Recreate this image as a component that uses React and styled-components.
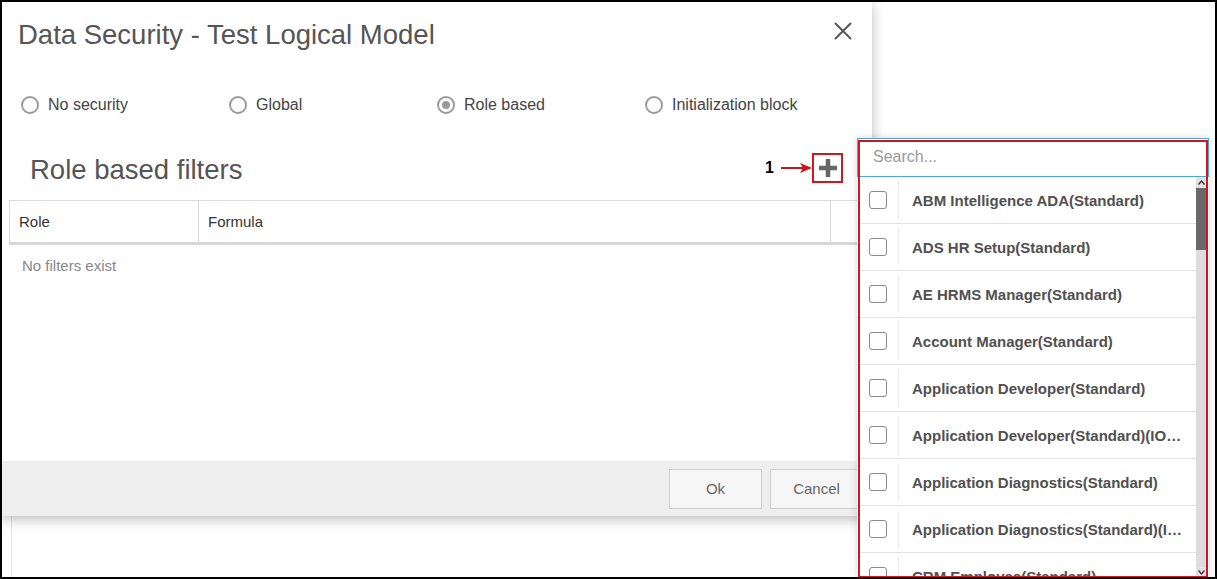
import React from "react";
import styled, { createGlobalStyle } from "styled-components";

const GlobalStyle = createGlobalStyle`
  html, body {
    margin: 0;
    padding: 0;
    background: #fff;
  }
  * {
    box-sizing: border-box;
  }
`;

const Frame = styled.div`
  position: relative;
  width: 1217px;
  height: 579px;
  border: 2px solid #000;
  background: #fff;
  overflow: hidden;
  font-family: "Liberation Sans", Arial, sans-serif;
`;

const BackPage = styled.div`
  height: 100%;
  padding-left: 9px;
`;

const BackPanel = styled.div`
  height: 100%;
  border-left: 1px solid #e4e4e4;
`;

const Dialog = styled.div`
  position: absolute;
  top: 0;
  left: 0;
  width: 870px;
  height: 514px;
  background: #fff;
  display: flex;
  flex-direction: column;
  box-shadow: 0 3px 12px rgba(0, 0, 0, 0.28);
`;

const Header = styled.div`
  display: flex;
  justify-content: space-between;
  align-items: flex-start;
  padding: 16px 20px 0 16px;
`;

const Title = styled.h1`
  margin: 0;
  font-size: 27.5px;
  line-height: 33px;
  font-weight: 400;
  color: #555;
`;

const CloseButton = styled.button`
  margin-top: 4px;
  width: 18px;
  height: 18px;
  padding: 0;
  border: none;
  background: none;
  display: flex;
  cursor: pointer;
`;

const RadioRow = styled.div`
  display: grid;
  grid-template-columns: repeat(4, 208px);
  margin-top: 44px;
  padding-left: 19px;
  height: 20px;
`;

const RadioItem = styled.label`
  display: flex;
  align-items: center;
  gap: 9px;
  font-size: 16px;
  color: #444;
`;

const RadioCircle = styled.span`
  width: 18px;
  height: 18px;
  border-radius: 50%;
  border: 2px solid #9b9b9b;
  display: flex;
  align-items: center;
  justify-content: center;
  &::after {
    content: "";
    width: 8px;
    height: 8px;
    border-radius: 50%;
    background: ${(props) => (props.checked ? "#9b9b9b" : "transparent")};
  }
`;

const SectionHeader = styled.div`
  display: flex;
  justify-content: space-between;
  align-items: center;
  margin-top: 38px;
  height: 33px;
  padding: 0 29px 0 28px;
`;

const SectionTitle = styled.h2`
  margin: 0;
  font-size: 27.5px;
  line-height: 33px;
  font-weight: 400;
  color: #555;
`;

const AddGroup = styled.div`
  display: flex;
  align-items: center;
  margin-top: -4px;
`;

const StepNumber = styled.span`
  font-size: 16px;
  font-weight: 700;
  color: #000;
  margin-right: 7px;
`;

const PlusBox = styled.button`
  width: 31px;
  height: 30px;
  border: 2px solid #d0161e;
  background: #fff;
  padding: 0;
  display: flex;
  align-items: center;
  justify-content: center;
  cursor: pointer;
`;

const Table = styled.div`
  margin: 14px 13px 0 7px;
`;

const HeadRow = styled.div`
  display: grid;
  grid-template-columns: 188px 632px 1fr;
  height: 45px;
  border: 1px solid #dcdcdc;
  border-bottom: 3px solid #d6d6d6;
`;

const HeadCell = styled.div`
  display: flex;
  align-items: center;
  padding-left: 9px;
  font-size: 15px;
  color: #333;
  border-left: ${(props) => (props.first ? "none" : "1px solid #dcdcdc")};
`;

const EmptyText = styled.div`
  padding: 12px 13px;
  font-size: 15px;
  line-height: 18px;
  color: #888;
`;

const Spacer = styled.div`
  flex: 1;
`;

const Footer = styled.div`
  height: 55px;
  background: #eeeeee;
  display: flex;
  justify-content: flex-end;
  align-items: center;
  gap: 8px;
  padding: 0 9px;
`;

const FooterButton = styled.button`
  width: 93px;
  height: 40px;
  border: 1px solid #cfcfcf;
  background: #f6f6f6;
  font-family: "Liberation Sans", Arial, sans-serif;
  font-size: 15px;
  color: #666;
  cursor: pointer;
`;

const Dropdown = styled.div`
  position: absolute;
  left: 855px;
  top: 136px;
  width: 352px;
  height: 440px;
  background: #fff;
  display: flex;
  flex-direction: column;
  box-shadow: 0 0 8px rgba(0, 0, 0, 0.14);
`;

const SearchInput = styled.input`
  height: 39px;
  flex-shrink: 0;
  border: 1px solid #4aa8dc;
  padding: 0 15px 2px;
  font-family: "Liberation Sans", Arial, sans-serif;
  font-size: 16px;
  color: #333;
  outline: none;
  &::placeholder {
    color: #9a9a9a;
  }
`;

const ListArea = styled.div`
  flex: 1;
  display: flex;
  min-height: 0;
  padding-right: 2px;
`;

const Rows = styled.div`
  flex: 1;
  min-width: 0;
  overflow: hidden;
`;

const Row = styled.div`
  display: flex;
  align-items: stretch;
  height: 47px;
  border-bottom: 1px solid #e3e3e3;
`;

const CheckCell = styled.div`
  width: 42px;
  flex-shrink: 0;
  display: flex;
  align-items: center;
  justify-content: center;
  margin: 4px 0;
  border-right: 1px solid #ebebeb;
`;

const Checkbox = styled.span`
  width: 18px;
  height: 18px;
  border: 1.5px solid #8a8a8a;
  border-radius: 3px;
  background: #fff;
`;

const RowLabel = styled.div`
  flex: 1;
  min-width: 0;
  display: flex;
  align-items: center;
  padding: 0 12px 0 13px;
  font-size: 15px;
  font-weight: 700;
  color: #505050;
  & > span {
    white-space: nowrap;
    overflow: hidden;
    text-overflow: ellipsis;
  }
`;

const ScrollBar = styled.div`
  width: 11px;
  flex-shrink: 0;
  display: flex;
  flex-direction: column;
  background: #dcdcdc;
`;

const ScrollArrow = styled.div`
  height: 11px;
  display: flex;
  align-items: center;
  justify-content: center;
  background: #e2e2e2;
`;

const ScrollThumb = styled.div`
  height: 62px;
  background: #686868;
`;

const Annotation = styled.div`
  position: absolute;
  top: 2px;
  left: 1px;
  right: 1px;
  bottom: 0;
  border: 2px solid #d0161e;
  pointer-events: none;
`;

const roles = [
  "ABM Intelligence ADA(Standard)",
  "ADS HR Setup(Standard)",
  "AE HRMS Manager(Standard)",
  "Account Manager(Standard)",
  "Application Developer(Standard)",
  "Application Developer(Standard)(IOT Administrator)",
  "Application Diagnostics(Standard)",
  "Application Diagnostics(Standard)(IOT Administrator)",
  "CRM Employee(Standard)",
];

const radios = [
  { label: "No security", checked: false },
  { label: "Global", checked: false },
  { label: "Role based", checked: true },
  { label: "Initialization block", checked: false },
];

const Caret = ({ up }) => (
  <svg width="7" height="5" viewBox="0 0 7 5">
    <path
      d={up ? "M0.5 4.5 L3.5 1 L6.5 4.5" : "M0.5 0.5 L3.5 4 L6.5 0.5"}
      fill="none"
      stroke="#333"
      strokeWidth="1.3"
    />
  </svg>
);

const App = () => {
  return (
    <Frame>
      <GlobalStyle />
      <BackPage>
        <BackPanel />
      </BackPage>

      <Dialog>
        <Header>
          <Title>Data Security - Test Logical Model</Title>
          <CloseButton>
            <svg width="18" height="18" viewBox="0 0 18 18">
              <path d="M1 1 L17 17 M17 1 L1 17" stroke="#555" strokeWidth="2" />
            </svg>
          </CloseButton>
        </Header>

        <RadioRow>
          {radios.map((r) => (
            <RadioItem key={r.label}>
              <RadioCircle checked={r.checked} />
              {r.label}
            </RadioItem>
          ))}
        </RadioRow>

        <SectionHeader>
          <SectionTitle>Role based filters</SectionTitle>
          <AddGroup>
            <StepNumber>1</StepNumber>
            <svg width="31" height="12" viewBox="0 0 31 12">
              <path d="M0 6 H23" stroke="#c4161c" strokeWidth="2" />
              <path d="M19 1 L31 6 L19 11 L22 6 Z" fill="#c4161c" />
            </svg>
            <PlusBox>
              <svg width="18" height="18" viewBox="0 0 18 18">
                <path d="M9 0 V18 M0 9 H18" stroke="#666" strokeWidth="4.5" />
              </svg>
            </PlusBox>
          </AddGroup>
        </SectionHeader>

        <Table>
          <HeadRow>
            <HeadCell first>Role</HeadCell>
            <HeadCell>Formula</HeadCell>
            <HeadCell />
          </HeadRow>
          <EmptyText>No filters exist</EmptyText>
        </Table>

        <Spacer />

        <Footer>
          <FooterButton>Ok</FooterButton>
          <FooterButton>Cancel</FooterButton>
        </Footer>
      </Dialog>

      <Dropdown>
        <SearchInput placeholder="Search..." />
        <ListArea>
          <Rows>
            {roles.map((role) => (
              <Row key={role}>
                <CheckCell>
                  <Checkbox />
                </CheckCell>
                <RowLabel>
                  <span>{role}</span>
                </RowLabel>
              </Row>
            ))}
          </Rows>
          <ScrollBar>
            <ScrollArrow>
              <Caret up />
            </ScrollArrow>
            <ScrollThumb />
            <Spacer />
            <ScrollArrow>
              <Caret />
            </ScrollArrow>
          </ScrollBar>
        </ListArea>
        <Annotation />
      </Dropdown>
    </Frame>
  );
};

export default App;
